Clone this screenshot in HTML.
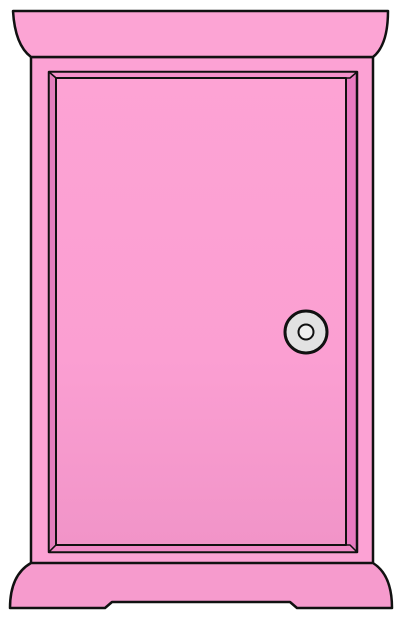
<!DOCTYPE html>
<html><head><style>html,body{margin:0;padding:0;background:#fff;width:402px;height:621px;overflow:hidden}</style></head>
<body>
<svg width="402" height="621" viewBox="0 0 402 621" xmlns="http://www.w3.org/2000/svg">
<defs>
<linearGradient id="g" x1="0" y1="0" x2="0" y2="1">
<stop offset="0" stop-color="#fda3d4"/><stop offset="0.6" stop-color="#fb9fd2"/><stop offset="1" stop-color="#f194c8"/>
</linearGradient>
</defs>
<g stroke="#111" stroke-width="2.5" stroke-linejoin="round">
<!-- body -->
<rect x="31" y="57" width="342" height="507" fill="#fca2d4"/>
<!-- top cap -->
<path d="M13 11 L388 11 Q388 45 373 57 L31 57 Q15 45 13 11 Z" fill="#fca4d4"/>
<!-- base -->
<path d="M31 563 L373 563 Q392 575 392 608 L297 608 L290 602 L112 602 L105 608 L10 608 Q10 575 31 563 Z" fill="#f69bcd"/>
<!-- frame -->
<rect x="49" y="72" width="308" height="480" fill="#e97ac0"/>
<path d="M49 72 L357 72 L350 78 L56 78 Z" fill="#f592cb" stroke-width="1.5"/>
<path d="M49 72 L56 78 L56 545 L49 552 Z" fill="#e37ebd" stroke-width="1.5"/>
<path d="M49 552 L56 545 L350 545 L357 552 Z" fill="#f08ac6" stroke-width="1.5"/>
<rect x="56" y="78" width="290" height="467" fill="url(#g)" stroke-width="2"/>
<!-- knob -->
<circle cx="306" cy="332" r="21" fill="#e2e2e2" stroke-width="3"/>
<circle cx="306" cy="332" r="7.5" fill="#efefef" stroke-width="2"/>
</g>
</svg>
</body></html>
